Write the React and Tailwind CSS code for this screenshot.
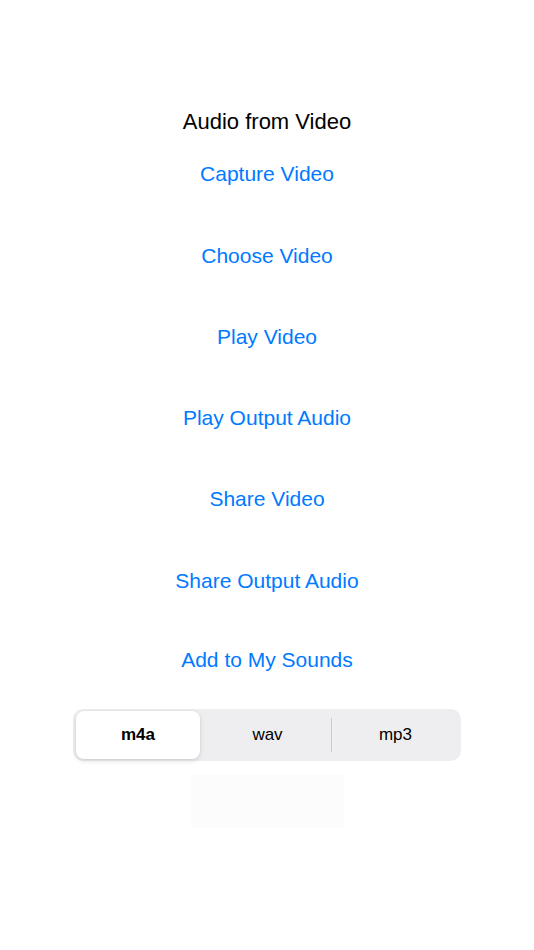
import React, { useState } from 'react';

const actions = [
  { label: 'Capture Video', mt: 'mt-[13px]' },
  { label: 'Choose Video', mt: 'mt-[42px]' },
  { label: 'Play Video', mt: 'mt-[41px]' },
  { label: 'Play Output Audio', mt: 'mt-[41px]' },
  { label: 'Share Video', mt: 'mt-[41px]' },
  { label: 'Share Output Audio', mt: 'mt-[42px]' },
  { label: 'Add to My Sounds', mt: 'mt-[39px]' },
];

const formats = ['m4a', 'wav', 'mp3'];

export default function App() {
  const [format, setFormat] = useState('m4a');

  return (
    <div
      className="w-[534px] h-[950px] bg-white flex flex-col items-center pt-[101px]"
      style={{ fontFamily: '"Liberation Sans", Arial, sans-serif' }}
    >
      <div className="h-[40px] flex items-center text-[22px] text-black">Audio from Video</div>

      {actions.map((a) => (
        <button
          key={a.label}
          type="button"
          className={`${a.mt} h-[40px] flex items-center text-[21px] text-[#007aff]`}
        >
          {a.label}
        </button>
      ))}

      {/* format picker */}
      <div className="mt-[29px] w-[388px] h-[52px] rounded-[10px] bg-[#eeeef0] p-[2px] grid grid-cols-3">
        {formats.map((f, i) => {
          const selected = f === format;
          const showDivider = i > 0 && formats[i - 1] !== format && f !== format;
          return (
            <div key={f} className="h-full flex items-center">
              <div className={`w-px h-[34px] ${showDivider ? 'bg-[#c9c9ce]' : 'bg-transparent'}`} />
              <button
                type="button"
                onClick={() => setFormat(f)}
                className={`flex-1 h-full rounded-[8px] text-[17px] text-black ${
                  selected
                    ? 'mr-[3px] bg-white font-semibold shadow-[0_2px_5px_rgba(0,0,0,0.12),0_0_0_0.5px_rgba(0,0,0,0.04)]'
                    : 'font-normal'
                }`}
              >
                {f}
              </button>
            </div>
          );
        })}
      </div>

      <div className="mt-[14px] w-[153px] h-[53px] bg-[#fcfcfc]" />
    </div>
  );
}
